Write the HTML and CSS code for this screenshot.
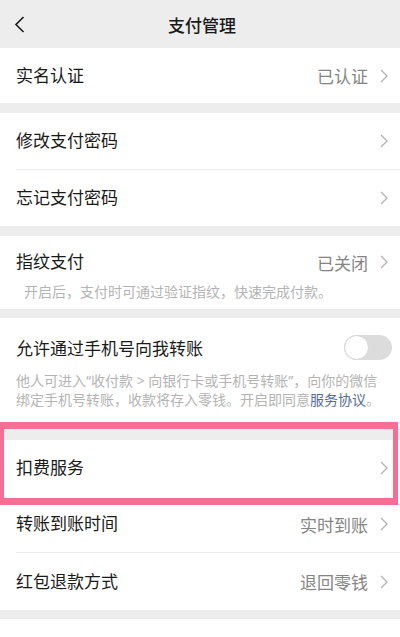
FILE: index.html
```html
<!DOCTYPE html>
<html lang="zh-CN">
<head>
<meta charset="utf-8">
<link rel="stylesheet" href="styles.css">
</head>
<body>
<div class="page">
  <header class="nav">
    <svg class="back" width="11" height="17" viewBox="0 0 11 17"><polyline points="9.5,1 2,8.5 9.5,16" fill="none" stroke="#1a1a1a" stroke-width="1.6"/></svg>
    <div class="nav-title">支付管理</div>
  </header>

  <section class="group">
    <div class="cell h55">
      <span class="label">实名认证</span>
      <span class="right"><span class="value">已认证</span><svg class="arrow" width="8" height="14" viewBox="0 0 8 14"><polyline points="1,1 7,7 1,13" fill="none" stroke="#b2b2b2" stroke-width="1.3"/></svg></span>
    </div>
  </section>

  <section class="group">
    <div class="cell h56">
      <span class="label">修改支付密码</span>
      <span class="right"><svg class="arrow" width="8" height="14" viewBox="0 0 8 14"><polyline points="1,1 7,7 1,13" fill="none" stroke="#b2b2b2" stroke-width="1.3"/></svg></span>
    </div>
    <div class="divider"></div>
    <div class="cell h56">
      <span class="label">忘记支付密码</span>
      <span class="right"><svg class="arrow" width="8" height="14" viewBox="0 0 8 14"><polyline points="1,1 7,7 1,13" fill="none" stroke="#b2b2b2" stroke-width="1.3"/></svg></span>
    </div>
  </section>

  <section class="group finger">
    <div class="row-line">
      <span class="label">指纹支付</span>
      <span class="right"><span class="value">已关闭</span><svg class="arrow" width="8" height="14" viewBox="0 0 8 14"><polyline points="1,1 7,7 1,13" fill="none" stroke="#b2b2b2" stroke-width="1.3"/></svg></span>
    </div>
    <p class="desc finger-desc">开启后，支付时可通过验证指纹，快速完成付款。</p>
  </section>

  <section class="group phone">
    <div class="row-line">
      <span class="label">允许通过手机号向我转账</span>
      <span class="toggle"><span class="knob"></span></span>
    </div>
    <p class="desc phone-desc">他人可进入“收付款 &gt; 向银行卡或手机号转账”，向你的微信绑定手机号转账，收款将存入零钱。开启即同意<span class="link">服务协议</span>。</p>
  </section>

  <section class="group last">
    <div class="cell h56">
      <span class="label">扣费服务</span>
      <span class="right"><svg class="arrow" width="8" height="14" viewBox="0 0 8 14"><polyline points="1,1 7,7 1,13" fill="none" stroke="#b2b2b2" stroke-width="1.3"/></svg></span>
    </div>
    <div class="cell h56">
      <span class="label">转账到账时间</span>
      <span class="right"><span class="value">实时到账</span><svg class="arrow" width="8" height="14" viewBox="0 0 8 14"><polyline points="1,1 7,7 1,13" fill="none" stroke="#b2b2b2" stroke-width="1.3"/></svg></span>
    </div>
    <div class="divider"></div>
    <div class="cell h57">
      <span class="label">红包退款方式</span>
      <span class="right"><span class="value">退回零钱</span><svg class="arrow" width="8" height="14" viewBox="0 0 8 14"><polyline points="1,1 7,7 1,13" fill="none" stroke="#b2b2b2" stroke-width="1.3"/></svg></span>
    </div>
  </section>

  <div class="tail"></div>

  <div class="highlight"></div>
</div>
</body>
</html>
```

FILE: styles.css
```css
* { box-sizing: border-box; }
html, body {
  margin: 0;
  padding: 0;
  background: #ededed;
}
body {
  font-family: "Noto Sans", "Noto Sans CJK SC", sans-serif;
  color: #1a1a1a;
  width: 400px;
  height: 637px;
  overflow: hidden;
}
.page {
  position: relative;
  display: flex;
  flex-direction: column;
  height: 637px;
}
.nav {
  height: 48px;
  display: flex;
  align-items: center;
  justify-content: center;
  position: relative;
  background: #ededed;
}
.back {
  position: absolute;
  left: 14px;
  top: 16px;
}
.nav-title {
  font-size: 17px;
  font-weight: 500;
  color: #1a1a1a;
  margin-left: 4px;
}
.group {
  background: #fff;
  margin-bottom: 10px;
}
.group.finger { margin-bottom: 9px; }
.group.phone { margin-bottom: 11px; }
.group.last { margin-bottom: 9px; }
.cell {
  display: flex;
  align-items: center;
  justify-content: space-between;
  padding: 0 12px 0 16px;
}
.h55 { height: 55px; }
.h56 { height: 56px; }
.h57 { height: 57px; }
.label {
  font-size: 17px;
  line-height: 24px;
  color: #1a1a1a;
}
.right {
  display: flex;
  align-items: center;
}
.value {
  font-size: 17px;
  color: #858585;
  margin-right: 12px;
}
.arrow { display: block; }
.divider {
  height: 1px;
  margin-left: 16px;
  background: #ececec;
}
.row-line {
  display: flex;
  align-items: center;
  justify-content: space-between;
  padding: 0 12px 0 16px;
  height: 24px;
}
.finger { padding: 14px 0 8px; }
.finger-desc {
  margin: 8px 0 0;
  padding-left: 24px;
}
.desc {
  font-size: 14px;
  line-height: 19px;
  color: #b4b4b4;
}
.phone { padding: 19px 0 20px; }
.phone .row-line { padding-right: 8px; }
.phone-desc {
  margin: 10px 0 0;
  padding: 0 10px 0 16px;
}
.link { color: #576b95; }
.toggle {
  width: 48px;
  height: 25px;
  border-radius: 13px;
  background: #dcdcdc;
  position: relative;
  margin-top: -4px;
  display: block;
}
.knob {
  position: absolute;
  left: 0;
  top: 0;
  width: 25px;
  height: 25px;
  border-radius: 50%;
  background: #fff;
  border: 1px solid #d4d4d4;
}
.tail {
  flex: 1;
  background: #fff;
}
.highlight {
  position: absolute;
  left: 0;
  top: 422px;
  width: 398px;
  height: 83px;
  border-style: solid;
  border-color: #f56f95;
  border-width: 7px 5px 7px 4px;
  pointer-events: none;
}
```
